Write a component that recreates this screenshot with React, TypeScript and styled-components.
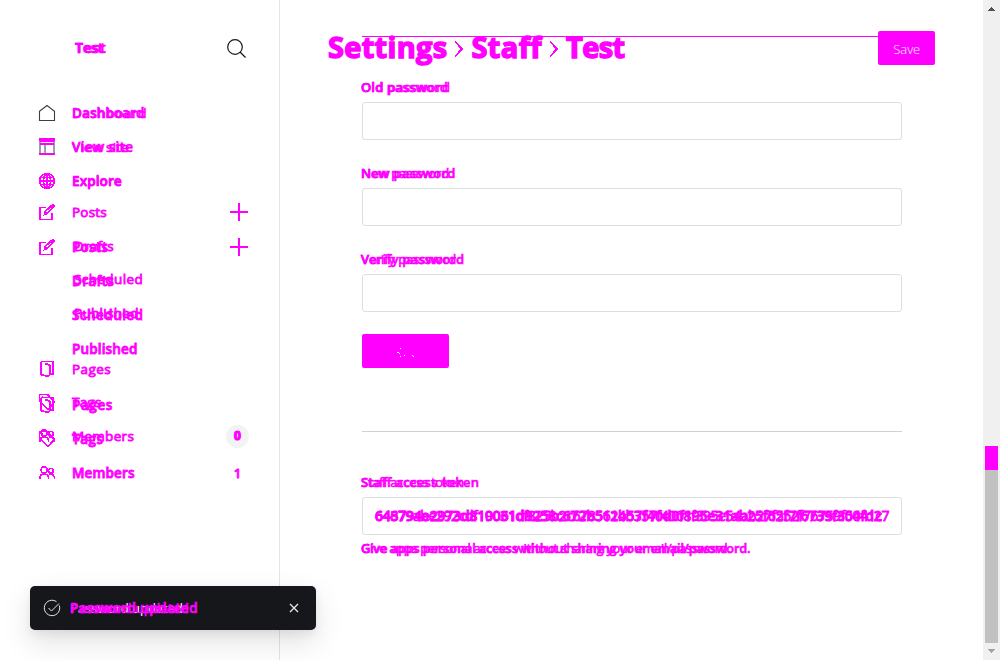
import React from "react";
import styled, { createGlobalStyle } from "styled-components";

const INK = "#ff00ff";

const Global = createGlobalStyle`
  * { box-sizing: border-box; }
  body { margin: 0; background: #fff; overflow: hidden; font-family: "Open Sans", sans-serif; }
`;

const Page = styled.div`
  display: grid;
  grid-template-columns: 280px 1fr 17px;
  width: 1000px;
  height: 660px;
  position: relative;
  overflow: hidden;
  background: #fff;
`;

const Sidebar = styled.aside`
  position: relative;
  border-right: 1px solid #e3e5e8;
`;

const Brand = styled.div`
  display: flex;
  align-items: center;
  justify-content: space-between;
  height: 96px;
  padding: 0 33px 0 75px;
`;

const Stack = styled.span`
  display: inline-grid;
  justify-items: start;
  align-items: center;
  > * { grid-area: 1 / 1; }
`;

const Ink = styled.span<{ $size?: number; $weight?: number; $gap?: number; $stroke?: number }>`
  color: ${INK};
  font-family: "Open Sans", sans-serif;
  font-size: ${(p) => p.$size ?? 13.5}px;
  font-weight: ${(p) => p.$weight ?? 500};
  letter-spacing: ${(p) => p.$gap ?? 0.2}px;
  -webkit-text-stroke: ${(p) => p.$stroke ?? 0.8}px ${INK};
  line-height: 20px;
  white-space: nowrap;
`;

const Nav = styled.nav<{ $over?: boolean }>`
  display: flex;
  flex-direction: column;
  width: 279px;
  ${(p) => p.$over && "position: absolute; left: 0; top: 230px;"}
`;

const NavRow = styled.div<{ $h?: number; $before?: number; $indent?: number }>`
  display: flex;
  align-items: center;
  height: ${(p) => p.$h ?? 34}px;
  margin-top: ${(p) => p.$before ?? 0}px;
  padding: 0 26px 0 ${(p) => p.$indent ?? 39}px;
  > svg:first-child { margin-right: 17px; }
`;

const Trailing = styled.span`
  margin-left: auto;
  margin-right: 5px;
  display: flex;
`;

const Count = styled.span<{ $fill?: boolean }>`
  display: grid;
  place-items: center;
  width: 23px;
  height: 23px;
  margin-left: auto;
  margin-right: 4px;
  border-radius: 12px;
  background: ${(p) => (p.$fill ? "#f1f3f5" : "transparent")};
`;

const Main = styled.main`
  position: relative;
  padding: 77px 81px 0 82px;
`;

const Header = styled.header`
  position: absolute;
  top: 31px;
  left: 48px;
  right: 48px;
  height: 34px;
  display: flex;
  justify-content: space-between;
`;

const HeaderRule = styled.div`
  position: absolute;
  top: 36px;
  left: 82px;
  width: 520px;
  height: 1px;
  background: ${INK};
`;

const Crumbs = styled.h1`
  display: flex;
  align-items: center;
  margin: 0;
  height: 32px;
  > svg { margin: 4px 8px 0 7px; }
`;

const Button = styled.button<{ $w: number; $lift?: number }>`
  display: grid;
  place-items: center;
  width: ${(p) => p.$w}px;
  height: 34px;
  margin-top: ${(p) => -(p.$lift ?? 0)}px;
  padding: 2px 0 0;
  border: 0;
  border-radius: 2px;
  background: ${INK};
  color: #fff;
  font: 300 13px "Open Sans", sans-serif;
`;

const Field = styled.div`
  display: flex;
  flex-direction: column;
  height: 86px;
`;

const Label = styled.label`
  display: flex;
  height: 25px;
  margin-left: -1px;
  > span { height: 20px; }
`;

const Input = styled.div`
  display: flex;
  align-items: center;
  height: 38px;
  padding: 0 12px;
  border: 1px solid #dddedf;
  border-radius: 3px;
  overflow: hidden;
  background: #fff;
`;

const Divider = styled.hr`
  height: 1px;
  margin: 63px 0 40px;
  border: 0;
  background: #ced1d5;
`;

const Hint = styled.div`
  display: flex;
  margin: 3px 0 0 -1px;
`;

const Scrollbar = styled.div`
  display: flex;
  flex-direction: column;
  align-items: center;
  background: #f0f0f0;
  > svg { flex: none; }
`;

const Thumb = styled.div`
  width: 13px;
  height: 197px;
  margin-top: 429px;
  border-top: 24px solid ${INK};
  background: #c1c1c1;
`;

const Toast = styled.div`
  position: absolute;
  left: 30px;
  top: 586px;
  display: flex;
  align-items: center;
  width: 286px;
  height: 44px;
  padding: 0 17px 0 14px;
  border-radius: 5px;
  background: #15171a;
  box-shadow: 0 0 1px rgba(0, 0, 0, 0.1), 0 12px 30px rgba(0, 0, 0, 0.12), 0 4px 10px rgba(0, 0, 0, 0.06);
  > span { margin-left: 10px; }
  > svg:last-child { margin-left: auto; }
`;

const White = styled.span`
  color: #fff;
  font: 500 13px/20px "Open Sans", sans-serif;
`;

type IconName = "home" | "site" | "globe" | "edit" | "page" | "tag" | "members";

const shapes: Record<IconName, React.ReactNode> = {
  home: <path d="M.5 6.2 8 .5l7.500 5.700v9.300H.5z" />,
  site: <path d="M0 .2h16M1 2.200h14M1 5.200h14M0 15.200h16M.7 0v2M15.300 0v2M.7 14v2M15.300 14v2" />,
  globe: (
    <>
      <circle cx="8" cy="8" r="7.500" />
      <ellipse cx="8" cy="8" rx="3.500" ry="7.500" />
      <path d="M0.500 8h15M8 .5v15M2 4.500h12M2 11.500h12" strokeWidth="1.200" />
    </>
  ),
  edit: <path d="M7 3.500H.7v11.800h12.500V9M5.500 10.500l.7-3 7-6.500q1.300-.5 2 .7l-7 7.700zM6 8l2 2" />,
  page: <path d="M1.700.5h12.500v12.500h-3M1.700.5v13l7.500 2 2-2V5L8.500 3h-3" />,
  tag: <path d="M.5.5h7.500l7.500 7.800-6.500 7.200L.5 7zM3 3l1 1M8 .5l3 1.500" />,
  members: (
    <>
      <circle cx="5.200" cy="5" r="3" />
      <circle cx="12" cy="5.800" r="2.400" />
      <path d="M.7 14v-2q1-3 4.500-3t4.300 3v2M10 9.500q4-1 5.300 2.500v2" />
    </>
  ),
};

const Icon = ({ name, dark }: { name: IconName; dark?: boolean }) => (
  <svg
    width="16"
    height="16"
    viewBox="0 0 16 16"
    fill="none"
    stroke={dark ? "#394047" : INK}
    strokeWidth={dark ? 1.1 : 1.6}
    shapeRendering={dark ? "auto" : "crispEdges"}
    overflow="visible"
  >
    {name === "site" && <path d="M1 0v16M6 5v10M15 0v16" stroke="#9aa1a6" strokeWidth="2" />}
    {shapes[name]}
  </svg>
);

const Plus = () => (
  <Trailing>
    <svg width="18" height="18" viewBox="0 0 18 18" fill={INK} shapeRendering="crispEdges">
      <path d="M8 0h2v18H8zM0 8h18v2H0z" />
    </svg>
  </Trailing>
);

const Chevron = () => (
  <svg width="9" height="16" viewBox="0 0 9 16" fill="none" stroke={INK} strokeWidth="1.700" shapeRendering="crispEdges">
    <path d="M1 .5 8 8l-7 7.500" />
  </svg>
);

type EchoProps = { text: string; gap?: number; echo?: number; size?: number; weight?: number };

const Echo = ({ text, gap = 0, echo = 0.3, size = 13.5, weight = 400 }: EchoProps) => (
  <Stack>
    <Ink $size={size} $weight={weight} $gap={gap} $stroke={0.6}>{text}</Ink>
    <Ink $size={size} $weight={600} $gap={echo} $stroke={0.6} aria-hidden>{text}</Ink>
  </Stack>
);

export default function App() {
  return (
    <>
      <Global />
      <Page>
        <Sidebar>
          <Brand>
            <Echo text="Test" weight={700} size={14} gap={-0.3} echo={0.8} />
            <svg width="19" height="19" viewBox="0 0 19 19" fill="none" stroke="#15171a" strokeWidth="1.200">
              <circle cx="8" cy="8" r="7.300" />
              <path d="m13 13 5.500 5.500" />
            </svg>
          </Brand>
          <Nav>
            <NavRow>
              <Icon name="home" dark />
              <Echo text="Dashboard" gap={0.6} echo={0.1} />
            </NavRow>
            <NavRow>
              <Icon name="site" />
              <Echo text="View site" gap={0.2} echo={0.4} />
            </NavRow>
            <NavRow>
              <Icon name="globe" />
              <Echo text="Explore" gap={0.4} echo={0.1} />
            </NavRow>
            <NavRow $h={28}>
              <Icon name="edit" />
              <Ink $weight={400}>Posts</Ink>
              <Plus />
            </NavRow>
            <NavRow $h={40} $indent={74}><Ink $weight={400} $gap={0.2}>Drafts</Ink></NavRow>
            <NavRow $h={26} $indent={74}><Ink $weight={400} $gap={0.4}>Scheduled</Ink></NavRow>
            <NavRow $h={42} $indent={74}><Ink $weight={400} $gap={0.3}>Published</Ink></NavRow>
            <NavRow $before={18} $h={33}>
              <Icon name="page" />
              <Ink $weight={400} $gap={0.4}>Pages</Ink>
            </NavRow>
            <NavRow $h={34}>
              <Icon name="tag" />
              <Ink $weight={400}>Tags</Ink>
            </NavRow>
            <NavRow $h={34}>
              <Icon name="members" />
              <Ink $weight={400} $gap={0.3}>Members</Ink>
              <Count $fill><Ink $weight={700} $size={12} $stroke={1.2}>0</Ink></Count>
            </NavRow>
          </Nav>
          <Nav $over>
            <NavRow>
              <Icon name="edit" />
              <Ink $weight={600}>Posts</Ink>
              <Plus />
            </NavRow>
            <NavRow $indent={72}><Ink $weight={600} $gap={0.3}>Drafts</Ink></NavRow>
            <NavRow $indent={72}><Ink $weight={600} $gap={0.45}>Scheduled</Ink></NavRow>
            <NavRow $indent={72}><Ink $weight={600} $gap={0.15}>Published</Ink></NavRow>
            <NavRow $before={22}>
              <Icon name="page" />
              <Ink $weight={600} $gap={0.6}>Pages</Ink>
            </NavRow>
            <NavRow>
              <Icon name="tag" />
              <Ink $weight={600} $gap={0.5}>Tags</Ink>
            </NavRow>
            <NavRow>
              <Icon name="members" />
              <Ink $weight={600} $gap={0.15}>Members</Ink>
              <Count><Ink $weight={600} $size={13}>1</Ink></Count>
            </NavRow>
          </Nav>
        </Sidebar>

        <Main>
          <HeaderRule />
          <Header>
            <Crumbs>
              <Ink $size={29} $weight={700} $stroke={1.4} $gap={0.3}>Settings</Ink>
              <Chevron />
              <Ink $size={29} $weight={700} $stroke={1.4} $gap={0.4}>Staff</Ink>
              <Chevron />
              <Ink $size={29} $weight={700} $stroke={1.4} $gap={-0.6}>Test</Ink>
            </Crumbs>
            <Button $w={57}>Save</Button>
          </Header>

          <Field>
            <Label><Echo text="Old password" size={13} gap={0.5} echo={0.1} /></Label>
            <Input />
          </Field>
          <Field>
            <Label><Echo text="New password" size={13} gap={-0.1} echo={0.2} /></Label>
            <Input />
          </Field>
          <Field>
            <Label><Echo text="Verify password" size={13} gap={-0.1} echo={0.2} /></Label>
            <Input />
          </Field>
          <Button $w={87} $lift={1} aria-label="Save">
            <svg width="17" height="9" viewBox="0 0 17 9" fill="#fff" shapeRendering="crispEdges">
              <path d="M3 0h1v1H3zM0 4h2v1H0zM2 5h1v1H2zM3 8h1v1H3zM7 7h1v1H7zM15 7h1v1h-1zM16 8h1v1h-1z" />
            </svg>
          </Button>
          <Divider />
          <Label>
            <Echo text="Staff access token" size={13} gap={-0.3} echo={0.3} />
          </Label>
          <Input>
            <Stack>
              <Ink $size={14} $weight={400} $gap={-0.42}>64679abe292cdf19031df825b2c6785614b357f4008f395e54ab27f552f76759f5041c7</Ink>
              <Ink $size={14} $weight={600} $gap={-0.2} aria-hidden>643794e2973d810061d8258c672b512b57f40d0f195e31ab25f62f7f6739f304fd2</Ink>
            </Stack>
          </Input>
          <Hint>
            <Echo text="Give apps personal access without sharing your email/password." size={12.8} gap={-0.25} echo={-0.15} />
          </Hint>
        </Main>

        <Scrollbar>
          <svg width="17" height="17" viewBox="0 0 17 17" fill="#505050" shapeRendering="crispEdges">
            <path d="M8 7h1v1H8zM7 8h3v1H7zM6 9h5v1H6zM5 10h7v1H5z" />
          </svg>
          <Thumb />
          <svg width="17" height="17" viewBox="0 0 17 17" fill="#a3a3a3" shapeRendering="crispEdges">
            <path d="M5 6h7v1H5zM6 7h5v1H6zM7 8h3v1H7zM8 9h1v1H8z" />
          </svg>
        </Scrollbar>

        <Toast>
          <svg width="16" height="16" viewBox="0 0 16 16" fill="none" stroke="#e8e9ea" strokeWidth="1" overflow="visible">
            <path d="M15.300 5.500A7.700 7.700 0 1 1 12.500 1.700M4.500 8l3 3 7.500-7.500" />
          </svg>
          <Stack>
            <White>Password updated</White>
            <Echo text="Password updated" size={13.5} gap={0.1} echo={0.45} />
          </Stack>
          <svg width="10" height="10" viewBox="0 0 10 10" stroke="#e8e9ea" strokeWidth="1.300">
            <path d="m1 1 8 8M9 1 1 9" />
          </svg>
        </Toast>
      </Page>
    </>
  );
}
